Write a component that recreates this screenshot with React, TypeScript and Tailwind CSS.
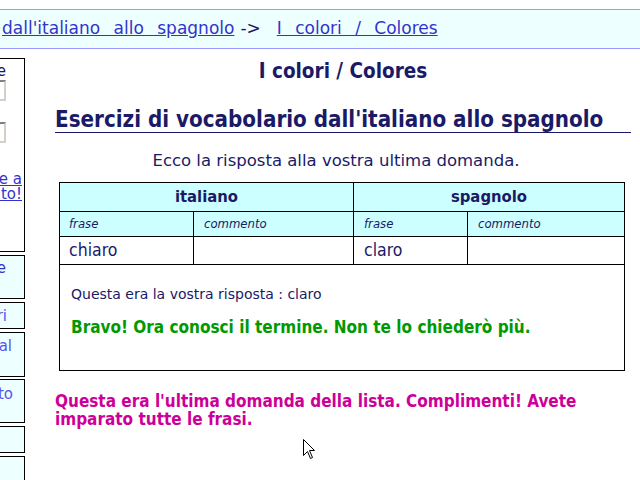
import React from "react";

const C = '"DejaVu Sans Condensed", "DejaVu Sans", Verdana, sans-serif';
const S = '"DejaVu Sans", Verdana, sans-serif';

function SideBox({ h, mt, children, white }: { h: number; mt: number; children?: React.ReactNode; white?: boolean }) {
  return (
    <div
      className={`relative w-[25px] border-y border-r border-black overflow-hidden ${white ? "bg-white" : "bg-[#eeffff]"}`}
      style={{ height: h, marginTop: mt }}
    >
      {children}
    </div>
  );
}

function Cursor() {
  return (
    <svg className="absolute left-[303px] top-[439px]" width="13" height="21" viewBox="0 0 13 21">
      <path d="M0.5 0.5 L0.5 16.5 L4.5 12.5 L7.5 19.5 L9.5 18.5 L6.5 11.5 L11.5 11.5 Z" fill="#fff" stroke="#000" strokeWidth="1" />
    </svg>
  );
}

export default function App() {
  return (
    <div className="relative w-[640px] h-[480px] overflow-hidden bg-white text-[#1a1a66]" style={{ fontFamily: C }}>
      {/* top bar */}
      <div
        className="mt-[9px] h-[40px] border-y border-[#9999ff] bg-[#eeffff] flex items-center pl-[2px] text-[17px] whitespace-nowrap overflow-hidden"
        style={{ fontFamily: S }}
      >
        <span className="text-[#3333cc] underline [word-spacing:8px]">dall'italiano allo spagnolo</span>
        <span className="ml-[6px] mr-[16px] text-[#1a1a66]">-&gt;</span>
        <span className="text-[#3333cc] underline [word-spacing:8px]">I colori / Colores</span>
      </div>

      <div className="flex">
        {/* sidebar */}
        <div className="w-[25px] shrink-0 flex flex-col" style={{ fontFamily: S }}>
          <SideBox h={194} mt={9} white>
            <div className="absolute right-[18px] top-[1px] text-[15px] text-[#1a1a66] whitespace-nowrap">Scegliere</div>
            <div className="absolute right-[18px] top-[21px] w-[60px] h-[21px] border-2 border-t-[#808080] border-l-[#808080] border-b-[#d4d0c8] border-r-[#d4d0c8] bg-white" />
            <div className="absolute right-[18px] top-[63px] w-[60px] h-[21px] border-2 border-t-[#808080] border-l-[#808080] border-b-[#d4d0c8] border-r-[#d4d0c8] bg-white" />
            <div className="absolute right-[2px] top-[113px] text-[15px] leading-[15px] text-[#3333cc] underline whitespace-nowrap text-right">
              Ritorna alla pagine a
              <br />
              all'inizio del sito!
            </div>
          </SideBox>
          <SideBox h={44} mt={3}>
            <div className="absolute right-[18px] top-[1px] text-[15px] text-[#3333cc] whitespace-nowrap">Home page</div>
          </SideBox>
          <SideBox h={27} mt={3}>
            <div className="absolute right-[17px] top-[2px] text-[15px] text-[#5555ee] whitespace-nowrap">Colori</div>
          </SideBox>
          <SideBox h={45} mt={3}>
            <div className="absolute right-[12px] top-[2px] text-[15px] text-[#5555ee] whitespace-nowrap">Ritorno al</div>
          </SideBox>
          <SideBox h={44} mt={2}>
            <div className="absolute right-[11px] top-[3px] text-[15px] text-[#5555ee] whitespace-nowrap">Contatto</div>
          </SideBox>
          <SideBox h={27} mt={3} />
          <SideBox h={40} mt={3} />
        </div>

        {/* main */}
        <div className="ml-[30px] w-[576px] flex flex-col">
          <h1 className="mt-[10px] text-center font-bold text-[20.5px] leading-[24px]">I colori / Colores</h1>
          <h2 className="mt-[23px] font-bold text-[22.2px] leading-[26px] border-b border-[#1a1a66]">
            Esercizi di vocabolario dall'italiano allo spagnolo
          </h2>
          <p className="mt-[18px] text-center text-[16.5px] leading-[20px] pr-[14px]" style={{ fontFamily: S }}>
            Ecco la risposta alla vostra ultima domanda.
          </p>

          <table className="mt-[11px] ml-[4px] w-[566px] border-collapse border border-black">
            <tbody>
              <tr className="h-[29px] bg-[#ccffff]">
                <th colSpan={2} className="border border-black font-bold text-[16.5px] text-center w-[294px]">italiano</th>
                <th colSpan={2} className="border border-black font-bold text-[16.5px] text-center">spagnolo</th>
              </tr>
              <tr className="h-[25px] bg-[#ccffff] text-[13px] italic">
                <td className="border border-black pl-[9px] w-[134px] font-normal">frase</td>
                <td className="border border-black pl-[10px] w-[160px] font-normal">commento</td>
                <td className="border border-black pl-[10px] w-[114px] font-normal">frase</td>
                <td className="border border-black pl-[10px] font-normal">commento</td>
              </tr>
              <tr className="h-[28px] text-[17.5px]">
                <td className="border border-black pl-[9px]">chiaro</td>
                <td className="border border-black"></td>
                <td className="border border-black pl-[10px]">claro</td>
                <td className="border border-black"></td>
              </tr>
              <tr className="h-[106px]">
                <td colSpan={4} className="border border-black pl-[11px] align-top">
                  <div className="mt-[20px] text-[14px] leading-[18px]" style={{ fontFamily: S }}>
                    Questa era la vostra risposta : claro
                  </div>
                  <div className="mt-[14px] text-[17px] leading-[20px] font-bold text-[#009900]">
                    Bravo! Ora conosci il termine. Non te lo chiederò più.
                  </div>
                </td>
              </tr>
            </tbody>
          </table>

          <p className="mt-[21px] text-[17px] leading-[18px] font-bold text-[#cc0099] w-[560px]">
            Questa era l'ultima domanda della lista. Complimenti! Avete imparato tutte le frasi.
          </p>
        </div>
      </div>
      <Cursor />
    </div>
  );
}
